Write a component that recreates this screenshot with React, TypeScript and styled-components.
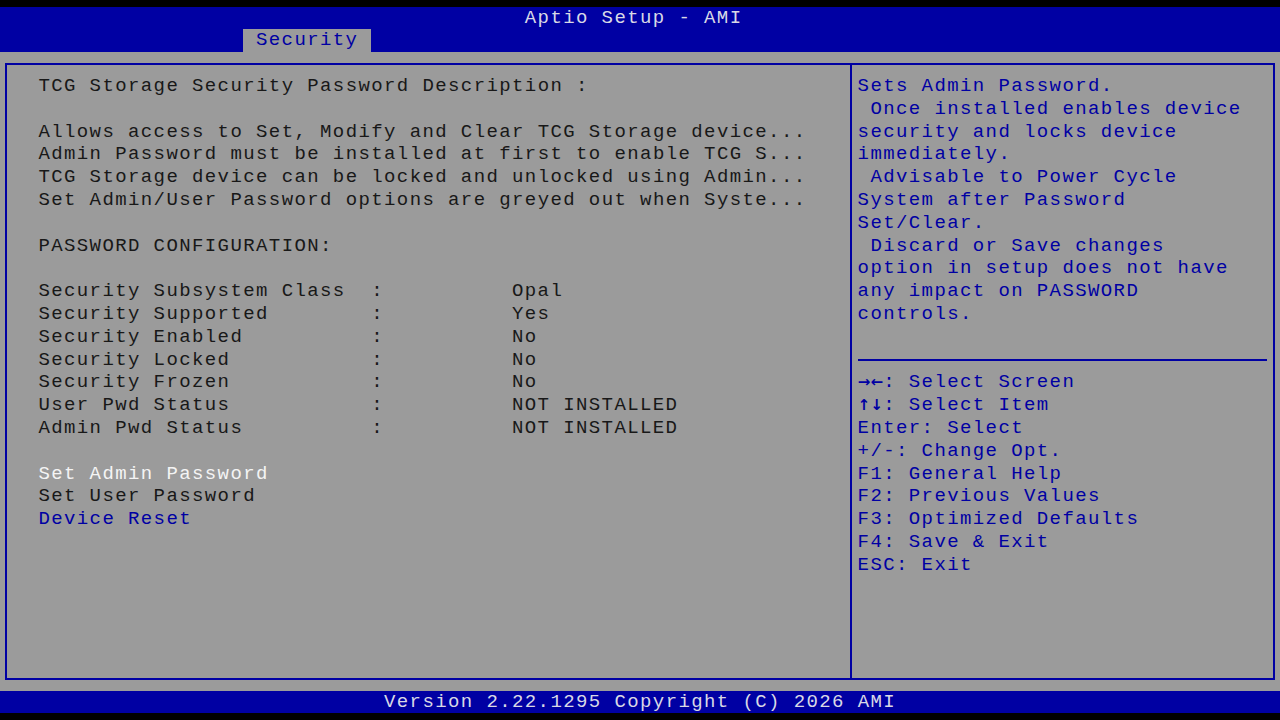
import React from 'react'
import styled, { createGlobalStyle } from 'styled-components'

// the setup screen is a 100 x 31 character grid
const CELL_W = 12.8
const CELL_H = 22.8
const FONT = 19
const ADVANCE = 0.6 // liberation mono advance per em
const cols = (n: number) => `${n * CELL_W}px`

const BLUE = '#0000a3'
const GREY = '#9b9b9b'
const INK = '#181818'
const LIGHT = '#d8d8e6'
const WHITE = '#f4f4f4'

const GlobalStyle = createGlobalStyle`
  html, body {
    margin: 0;
    padding: 0;
    background: #000;
  }
`

const statusRows = [
  ['Security Subsystem Class', 'Opal'],
  ['Security Supported', 'Yes'],
  ['Security Enabled', 'No'],
  ['Security Locked', 'No'],
  ['Security Frozen', 'No'],
  ['User Pwd Status', 'NOT INSTALLED'],
  ['Admin Pwd Status', 'NOT INSTALLED'],
]

const descriptionLines = [
  'Allows access to Set, Modify and Clear TCG Storage device...',
  'Admin Password must be installed at first to enable TCG S...',
  'TCG Storage device can be locked and unlocked using Admin...',
  'Set Admin/User Password options are greyed out when Syste...',
]

const helpLines = [
  'Sets Admin Password.',
  ' Once installed enables device',
  'security and locks device',
  'immediately.',
  ' Advisable to Power Cycle',
  'System after Password',
  'Set/Clear.',
  ' Discard or Save changes',
  'option in setup does not have',
  'any impact on PASSWORD',
  'controls.',
]

const keyLines: [string[], string][] = [
  [['→', '←'], ': Select Screen'],
  [['↑', '↓'], ': Select Item'],
  [[], 'Enter: Select'],
  [[], '+/-: Change Opt.'],
  [[], 'F1: General Help'],
  [[], 'F2: Previous Values'],
  [[], 'F3: Optimized Defaults'],
  [[], 'F4: Save & Exit'],
  [[], 'ESC: Exit'],
]

const App: React.FC = () => {
  return (
    <Screen>
      <GlobalStyle />
      <Header>
        <TitleRow>Aptio Setup - AMI</TitleRow>
        <TabRow>
          <Tab>Security</Tab>
        </TabRow>
      </Header>

      <Main>
        <Frame>
          <LeftPanel>
            <Line>TCG Storage Security Password Description :</Line>
            <Line />
            {descriptionLines.map((text) => (
              <Line key={text}>{text}</Line>
            ))}
            <Line />
            <Line>PASSWORD CONFIGURATION:</Line>
            <Line />
            {statusRows.map(([label, value]) => (
              <StatusRow key={label}>
                <span>{label}</span>
                <span>:</span>
                <span>{value}</span>
              </StatusRow>
            ))}
            <Line />
            <Line $color={WHITE}>Set Admin Password</Line>
            <Line>Set User Password</Line>
            <Line $color={BLUE}>Device Reset</Line>
          </LeftPanel>

          <RightPanel>
            {helpLines.map((text) => (
              <Line key={text} $color={BLUE}>
                {text}
              </Line>
            ))}
            <Line />
            <Divider />
            {keyLines.map(([arrows, text]) => (
              <Line key={text} $color={BLUE}>
                {arrows.map((a) => (
                  <Arrow key={a}>{a}</Arrow>
                ))}
                {text}
              </Line>
            ))}
          </RightPanel>
        </Frame>
      </Main>

      <Footer>Version 2.22.1295 Copyright (C) 2026 AMI</Footer>
    </Screen>
  )
}

export default App

const Screen = styled.div`
  width: 1280px;
  height: 720px;
  box-sizing: border-box;
  padding: 6.6px 0;
  background: #000;
  display: flex;
  flex-direction: column;
  overflow: hidden;

  font-family: 'Liberation Mono', 'DejaVu Sans Mono', monospace;
  font-size: ${FONT}px;
  letter-spacing: ${CELL_W - FONT * ADVANCE}px;
  line-height: ${CELL_H}px;
  white-space: pre;
`

const Header = styled.div`
  background: ${BLUE};
  display: flex;
  flex-direction: column;
`

const TitleRow = styled.div`
  height: ${CELL_H}px;
  padding-left: ${cols(41)};
  color: ${LIGHT};
`

const TabRow = styled.div`
  height: ${CELL_H}px;
  padding-left: ${cols(19)};
  display: flex;
`

const Tab = styled.div`
  width: ${cols(10)};
  box-sizing: border-box;
  padding-left: ${cols(1)};
  background: ${GREY};
  color: ${BLUE};
`

// frame lines run through the middle of the border cells
const Main = styled.div`
  height: ${CELL_H * 28}px;
  box-sizing: border-box;
  padding: ${CELL_H / 2 - 1}px ${CELL_W / 2 - 1}px;
  background: ${GREY};
`

const Frame = styled.div`
  height: 100%;
  box-sizing: border-box;
  border: 2px solid ${BLUE};
  display: flex;
`

const LeftPanel = styled.div`
  width: ${cols(66)};
  box-sizing: border-box;
  border-right: 2px solid ${BLUE};
  padding: ${CELL_H / 2 - 1}px 0 0 ${CELL_W * 2.5 - 1}px;
  color: ${INK};
`

const RightPanel = styled.div`
  flex: 1;
  padding: ${CELL_H / 2 - 1}px ${CELL_W / 2 - 1}px 0;
  color: ${BLUE};
`

const Line = styled.div<{ $color?: string }>`
  height: ${CELL_H}px;
  color: ${(p) => p.$color ?? 'inherit'};
`

const StatusRow = styled.div`
  height: ${CELL_H}px;
  display: grid;
  grid-template-columns: ${cols(26)} ${cols(11)} 1fr;
`

const Arrow = styled.span`
  display: inline-block;
  width: ${CELL_W}px;
  font-family: 'DejaVu Sans', sans-serif;
  font-size: 15px;
  font-weight: bold;
  letter-spacing: 0;
  text-align: center;
`

const Divider = styled.div`
  height: ${CELL_H}px;
  display: flex;
  align-items: center;

  &::after {
    content: '';
    flex: 1;
    height: 2px;
    background: ${BLUE};
  }
`

const Footer = styled.div`
  height: ${CELL_H}px;
  padding-left: ${cols(30)};
  background: ${BLUE};
  color: ${LIGHT};
`
